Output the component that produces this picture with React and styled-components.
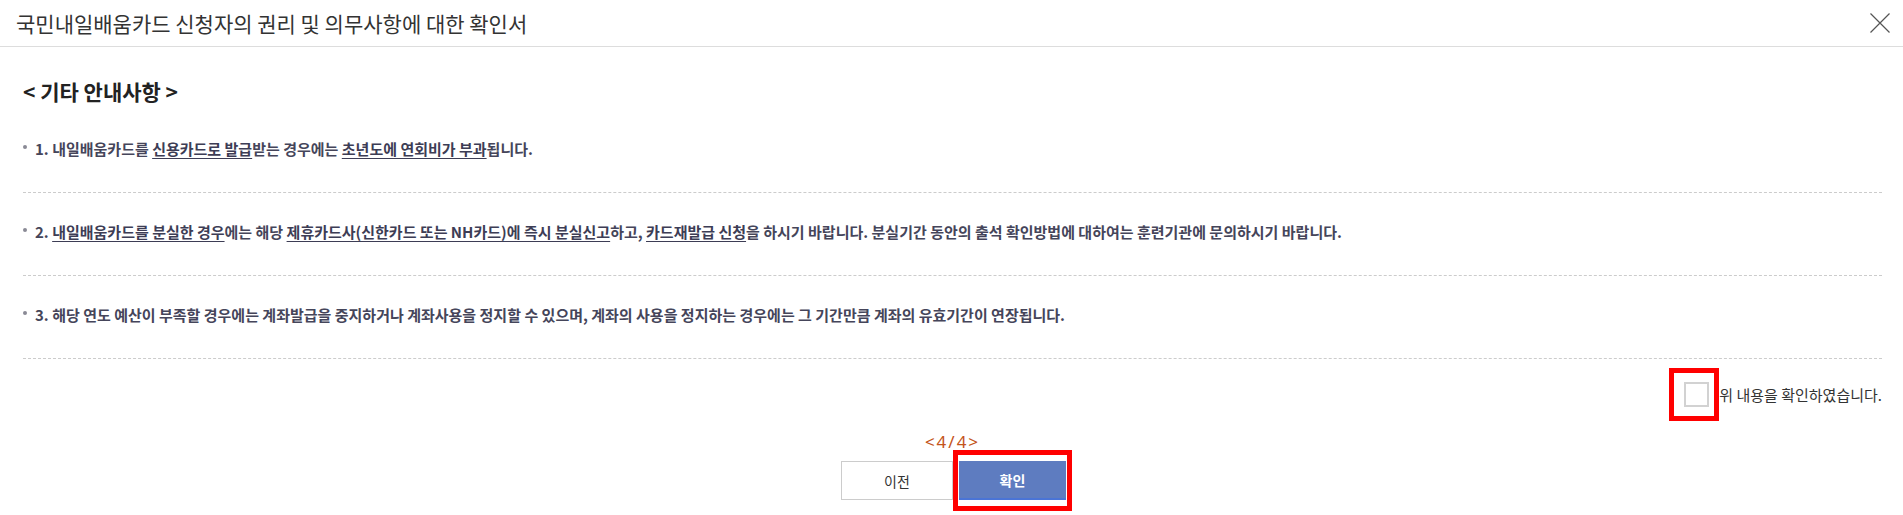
import React from 'react'
import styled, { createGlobalStyle } from 'styled-components'

const GlobalStyle = createGlobalStyle`
    body {
        margin: 0;
        background: #fff;
        font-family: 'Noto Sans CJK KR', 'Noto Sans', sans-serif;
        color: #333;
    }
`;

const Modal = styled.div`
    width: 100%;
    background: #fff;
`;

const Header = styled.div`
    display: flex;
    align-items: center;
    justify-content: space-between;
    height: 46px;
    padding: 0 13px 0 16px;
    border-bottom: 1px solid #dddddd;
`;

const Title = styled.h2`
    margin: 0;
    font-size: 21px;
    font-weight: 400;
    color: #333;
    line-height: 26px;
`;

const CloseButton = styled.button`
    width: 20px;
    height: 20px;
    padding: 0;
    border: none;
    background: transparent;
    cursor: pointer;
    display: flex;
`;

const Content = styled.div`
    padding: 32px 21px 0 23px;
`;

const Heading = styled.h3`
    margin: 0 0 7px;
    font-size: 21px;
    font-weight: 700;
    line-height: 24px;
    color: #222;
`;

const Item = styled.div`
    display: flex;
    align-items: center;
    padding: 29px 0 33px;
    border-bottom: 1px dashed #cccccc;
    font-size: 15px;
    font-weight: 700;
    line-height: 20px;
    color: #45455a;
    white-space: nowrap;
`;

const Bullet = styled.span`
    width: 4px;
    height: 4px;
    border-radius: 50%;
    background: #8a8a95;
    margin: 0 8px 5px 0;
    flex-shrink: 0;
`;

const Mark = styled.span`
    text-decoration: underline;
    text-underline-offset: 3px;
    color: #3d3d55;
`;

const AgreeRow = styled.div`
    display: flex;
    justify-content: flex-end;
    align-items: center;
    margin-top: 9px;
    font-size: 15px;
    color: #333;
`;

const RedFrame = styled.div`
    display: flex;
    border: 5px solid #ff0000;
    padding: ${({ compact }) => (compact ? '6px 1px' : '9px 5px 9px 10px')};
`;

const CheckBox = styled.span`
    display: block;
    width: 25px;
    height: 25px;
    box-sizing: border-box;
    border: 2px solid #d2d2d2;
    background: #fff;
`;

const Pager = styled.div`
    margin-top: 12px;
    text-align: center;
    font-size: 17px;
    line-height: 18px;
    letter-spacing: 2px;
    color: #c4541a;
    font-family: 'Noto Sans', sans-serif;
`;

const ButtonRow = styled.div`
    display: flex;
    justify-content: center;
    align-items: center;
    margin-top: -1px;
    padding-left: 8px;
`;

const Button = styled.button`
    height: 39px;
    width: ${({ primary }) => (primary ? '107px' : '112px')};
    box-sizing: border-box;
    font-family: inherit;
    font-size: 14px;
    font-weight: ${({ primary }) => (primary ? 700 : 400)};
    color: ${({ primary }) => (primary ? '#fff' : '#333')};
    background: ${({ primary }) => (primary ? '#5e7cc0' : '#fff')};
    border: ${({ primary }) => (primary ? 'none' : '1px solid #cccccc')};
    border-bottom: ${({ primary }) => (primary ? '2px solid #4a74d6' : '1px solid #cccccc')};
    cursor: pointer;
`;

const App = () => {
    return (
        <Modal>
            <GlobalStyle />
            <Header>
                <Title>국민내일배움카드 신청자의 권리 및 의무사항에 대한 확인서</Title>
                <CloseButton aria-label="닫기">
                    <svg width="20" height="20" viewBox="0 0 20 20">
                        <path d="M0.5 0.5 L19.5 19.5 M19.5 0.5 L0.5 19.5" stroke="#555" strokeWidth="1.2" />
                    </svg>
                </CloseButton>
            </Header>
            <Content>
                <Heading>&lt; 기타 안내사항 &gt;</Heading>
                <Item>
                    <Bullet />
                    <span>
                        1. 내일배움카드를 <Mark>신용카드로 발급</Mark>받는 경우에는 <Mark>초년도에 연회비가 부과</Mark>됩니다.
                    </span>
                </Item>
                <Item>
                    <Bullet />
                    <span>
                        2. <Mark>내일배움카드를 분실한 경우</Mark>에는 해당 <Mark>제휴카드사(신한카드 또는 NH카드)에 즉시 분실신고</Mark>하고, <Mark>카드재발급 신청</Mark>을 하시기 바랍니다. 분실기간 동안의 출석 확인방법에 대하여는 훈련기관에 문의하시기 바랍니다.
                    </span>
                </Item>
                <Item>
                    <Bullet />
                    <span>
                        3. 해당 연도 예산이 부족할 경우에는 계좌발급을 중지하거나 계좌사용을 정지할 수 있으며, 계좌의 사용을 정지하는 경우에는 그 기간만큼 계좌의 유효기간이 연장됩니다.
                    </span>
                </Item>
                <AgreeRow>
                    <RedFrame>
                        <CheckBox />
                    </RedFrame>
                    <span>위 내용을 확인하였습니다.</span>
                </AgreeRow>
                <Pager>&lt;4/4&gt;</Pager>
                <ButtonRow>
                    <Button>이전</Button>
                    <RedFrame compact>
                        <Button primary>확인</Button>
                    </RedFrame>
                </ButtonRow>
            </Content>
        </Modal>
    )
}

export default App
